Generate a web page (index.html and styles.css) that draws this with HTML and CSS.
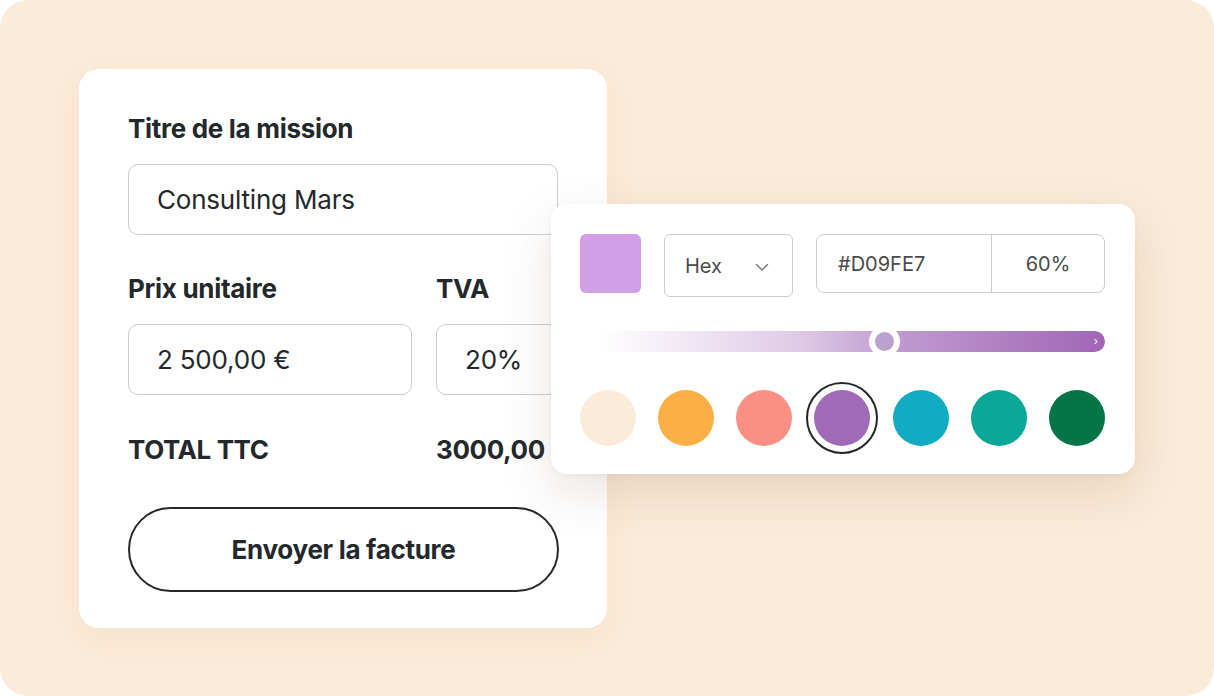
FILE: index.html
```html
<!DOCTYPE html>
<html lang="fr">
<head>
    <meta charset="UTF-8">
    <meta name="viewport" content="width=device-width, initial-scale=1.0">
    <title>Facture</title>
    <link rel="stylesheet" href="styles.css">
</head>
<body>
    <div class="stage">

        <!-- invoice form -->
        <div class="card">
            <label class="label">Titre de la mission</label>
            <div class="field">Consulting Mars</div>

            <div class="row">
                <div class="col col-price">
                    <label class="label">Prix unitaire</label>
                    <div class="field">2 500,00 €</div>
                </div>
                <div class="col col-tva">
                    <label class="label">TVA</label>
                    <div class="field">20%</div>
                </div>
            </div>

            <div class="total">
                <span class="total-label">TOTAL TTC</span>
                <span class="total-value">3000,00</span>
            </div>

            <button class="send-btn">Envoyer la facture</button>
        </div>

        <!-- colour picker popover -->
        <div class="picker">
            <div class="picker-top">
                <div class="swatch"></div>
                <div class="select">
                    <span>Hex</span>
                    <svg width="14" height="9" viewBox="0 0 14 9"><path d="M1.5 1.5 L7 7 L12.5 1.5" fill="none" stroke="#7a7a7a" stroke-width="1.5" stroke-linecap="round" stroke-linejoin="round"/></svg>
                </div>
                <div class="hex-group">
                    <span class="hex-value">#D09FE7</span>
                    <span class="hex-alpha">60%</span>
                </div>
            </div>

            <div class="slider">
                <span class="thumb"></span>
                <span class="slider-end">›</span>
            </div>

            <div class="colors">
                <span class="dot c-peach"></span>
                <span class="dot c-orange"></span>
                <span class="dot c-salmon"></span>
                <span class="dot c-purple selected"></span>
                <span class="dot c-cyan"></span>
                <span class="dot c-teal"></span>
                <span class="dot c-green"></span>
            </div>
        </div>

    </div>
</body>
</html>
```

FILE: styles.css
```css
* {
    box-sizing: border-box;
}

body {
    margin: 0;
    background: #ffffff;
    font-family: Inter, "Noto Sans", sans-serif;
    color: #23282c;
}

.stage {
    position: relative;
    width: 1214px;
    height: 696px;
    background-color: #fcebd9;
    border-radius: 28px;
    padding: 69px 0 0 79px;
    overflow: hidden;
}

/* ---- invoice card ---- */

.card {
    width: 528px;
    height: 559px;
    background: #ffffff;
    border-radius: 20px;
    box-shadow: 0 10px 30px rgba(190, 150, 110, 0.10);
    padding: 44px 49px 0 49px;
    display: flex;
    flex-direction: column;
}

.label {
    display: block;
    font-size: 26px;
    font-weight: 700;
    line-height: 32px;
    letter-spacing: -0.3px;
    color: #23282c;
}

.field {
    margin-top: 19px;
    height: 71px;
    border: 1.5px solid #c6cdd1;
    border-radius: 10px;
    padding: 0 28px;
    display: flex;
    align-items: center;
    font-size: 26px;
    letter-spacing: -0.2px;
    color: #23282c;
}

.row {
    display: flex;
    gap: 24px;
    margin-top: 38px;
}

.col-price {
    width: 284px;
}

.col-tva {
    flex: 1;
}

.total {
    display: flex;
    margin-top: 39px;
    font-size: 26px;
    font-weight: 700;
    line-height: 32px;
    letter-spacing: -0.4px;
}

.total-label {
    width: 308px;
}

.send-btn {
    margin-top: 41px;
    height: 85px;
    width: 431px;
    border: 2px solid #23282c;
    border-radius: 43px;
    background: #ffffff;
    font-family: inherit;
    font-size: 26px;
    font-weight: 700;
    letter-spacing: -0.3px;
    color: #23282c;
}

/* ---- colour picker ---- */

.picker {
    position: absolute;
    left: 551px;
    top: 204px;
    width: 584px;
    height: 270px;
    background: #ffffff;
    border-radius: 16px;
    box-shadow: 0 18px 50px rgba(120, 90, 60, 0.16), 0 2px 6px rgba(0, 0, 0, 0.04);
    padding: 30px 30px 0 29px;
}

.picker-top {
    display: flex;
    align-items: flex-start;
    gap: 23px;
}

.swatch {
    width: 61px;
    height: 59px;
    border-radius: 6px;
    background: #d09fe7;
}

.select {
    width: 129px;
    height: 63px;
    border: 1px solid #c9cdd0;
    border-radius: 6px;
    display: flex;
    align-items: center;
    justify-content: space-between;
    padding: 0 23px 0 20px;
    font-size: 20px;
    color: #4b4b4b;
}

.select svg {
    margin-top: 3px;
}

.hex-group {
    width: 289px;
    height: 59px;
    border: 1px solid #c9cdd0;
    border-radius: 8px;
    display: flex;
    align-items: center;
    font-size: 20px;
    color: #4b4b4b;
}

.hex-value {
    width: 175px;
    height: 100%;
    display: flex;
    align-items: center;
    padding-left: 21px;
    border-right: 1px solid #c9cdd0;
}

.hex-alpha {
    flex: 1;
    text-align: center;
}

.slider {
    position: relative;
    margin: 34px 0 0 18px;
    height: 21px;
    border-radius: 11px;
    background: linear-gradient(90deg, rgba(160, 102, 182, 0) 0%, rgba(160, 102, 182, 0.35) 40%, #c19bd0 58%, #a066b6 100%);
}

.thumb {
    position: absolute;
    left: 271px;
    top: -5px;
    width: 31px;
    height: 31px;
    border-radius: 50%;
    background: #b9a2cb;
    border: 6px solid #ffffff;
}

.slider-end {
    position: absolute;
    right: 7px;
    top: 1px;
    font-size: 11px;
    line-height: 18px;
    color: #ffffff;
}

.colors {
    display: flex;
    justify-content: space-between;
    align-items: center;
    margin-top: 38px;
}

.dot {
    position: relative;
    width: 56px;
    height: 56px;
    border-radius: 50%;
}

.dot.selected::after {
    content: "";
    position: absolute;
    inset: -8px;
    border: 2px solid #23282c;
    border-radius: 50%;
}

.c-peach { background: #fcebd9; }
.c-orange { background: #fbaf45; }
.c-salmon { background: #fb8f83; }
.c-purple { background: #a06ab8; }
.c-cyan { background: #12abc2; }
.c-teal { background: #0ba797; }
.c-green { background: #037546; }
```
